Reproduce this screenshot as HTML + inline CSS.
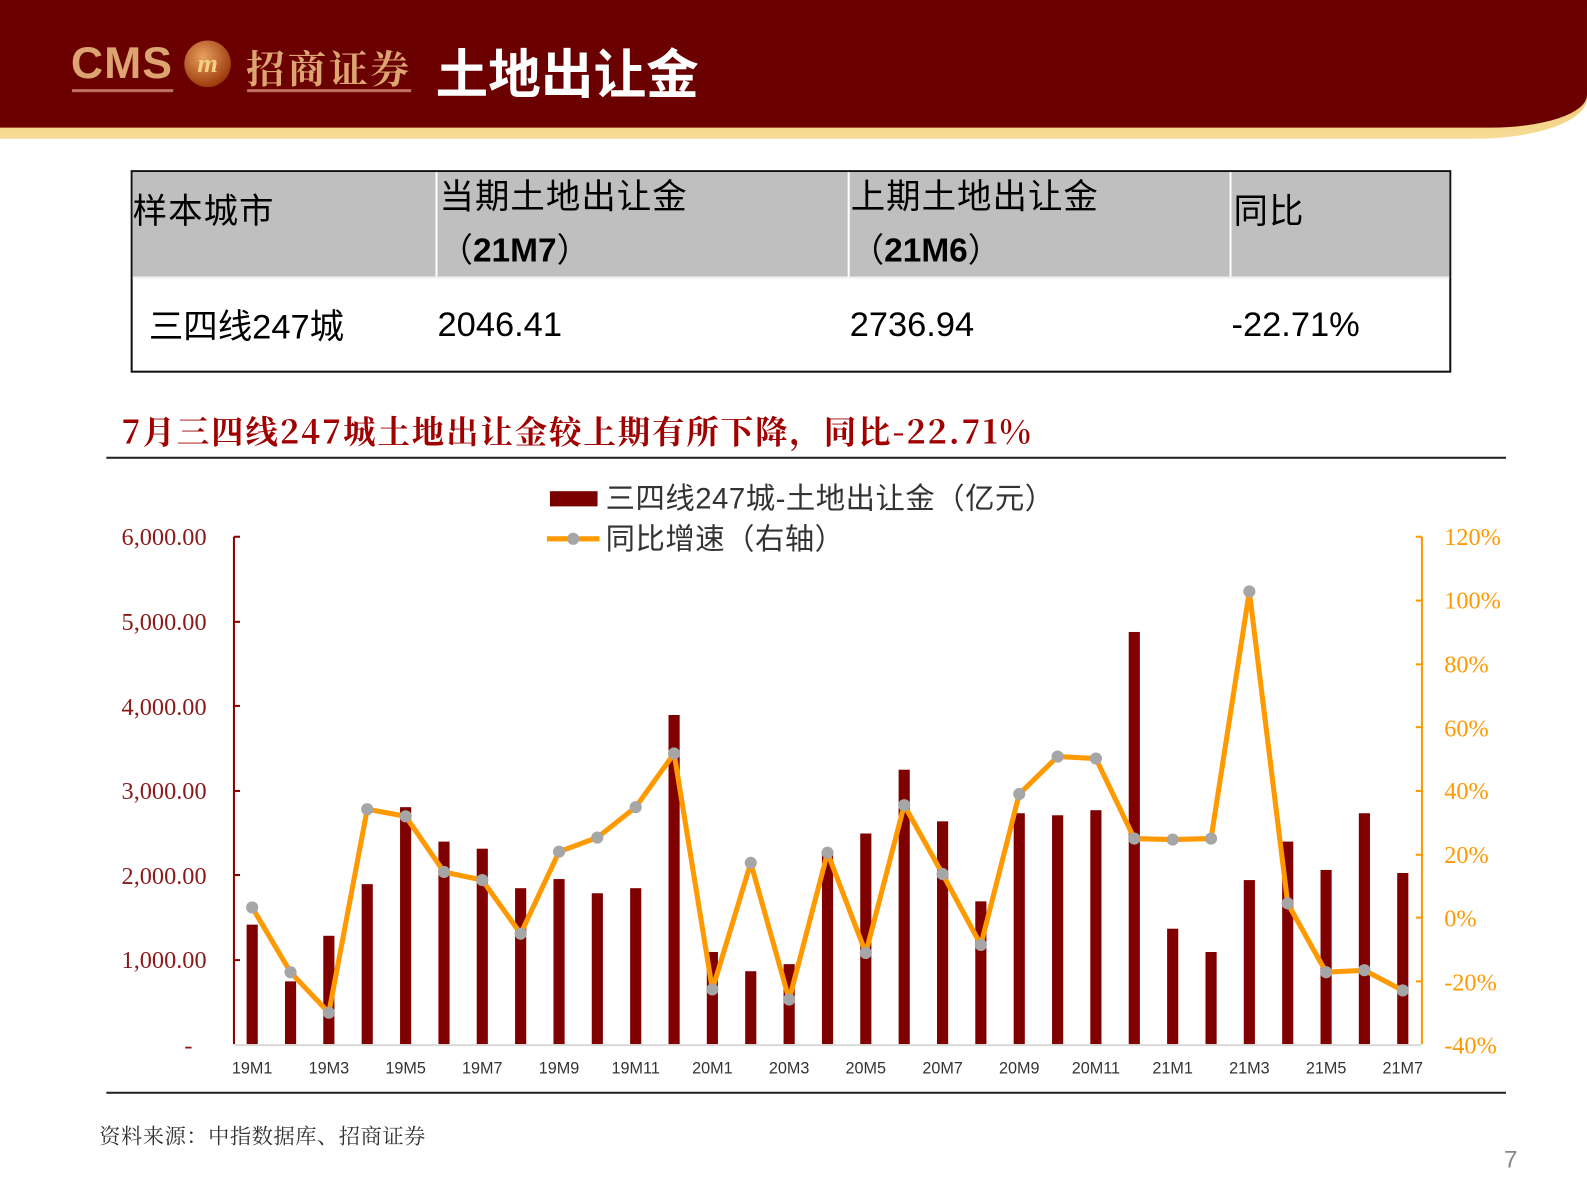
<!DOCTYPE html>
<html><head><meta charset="utf-8"><style>
html,body{margin:0;padding:0;background:#fff;width:1587px;height:1190px;overflow:hidden}
#w{position:absolute;left:0;top:0;width:1567px;height:1175px;transform:scale(1.01276);transform-origin:0 0;font-family:"Liberation Sans","Noto Sans CJK SC",sans-serif}
.a{position:absolute;white-space:nowrap}
</style></head><body><div id="w">
<div class="a" style="left:0;top:0;width:1567px;height:137px;background:linear-gradient(#b8792a,#e9b955 40%,#f7dc98);border-bottom-right-radius:110px 40px"></div>
<div class="a" style="left:0;top:0;width:1567px;height:126px;background:#6b0000;border-bottom-right-radius:95px 32px"></div>
<div class="a" style="left:70px;top:38px;font-size:44px;font-weight:bold;color:#dca470;letter-spacing:1px">CMS</div>
<div class="a" style="left:71px;top:88px;width:100px;height:3px;background:#c07060"></div>
<div class="a" style="left:182px;top:40px;width:46px;height:46px;border-radius:50%;background:radial-gradient(circle at 40% 35%,#e8a060,#a04010 70%,#6a1a00);color:#f3d080;font:italic bold 26px 'Liberation Serif',serif;text-align:center;line-height:46px">m</div>
<div class="a" style="left:243px;top:38px;font-size:38px;font-weight:bold;color:#dca470;font-family:'Noto Serif CJK SC',serif;letter-spacing:3px">招商证券</div>
<div class="a" style="left:244px;top:88px;width:162px;height:3px;background:#c07060"></div>
<div class="a" style="left:430px;top:32px;font-size:52px;font-weight:bold;color:#fff;font-family:'Noto Sans CJK SC',sans-serif">土地出让金</div>

<div class="a" style="left:129px;top:168px;width:1300px;height:196px;border:2px solid #111"></div>
<div class="a" style="left:131px;top:170px;width:1300px;height:103px;background:#bfbfbf"></div>
<div class="a" style="left:430px;top:170px;width:2px;height:103px;background:#fff"></div>
<div class="a" style="left:837px;top:170px;width:2px;height:103px;background:#fff"></div>
<div class="a" style="left:1214px;top:170px;width:2px;height:103px;background:#fff"></div>
<div class="a" style="left:131px;top:273px;width:1300px;height:2px;background:#f0f0f0"></div>
<div class="a" style="left:131px;top:181px;font-size:34px;letter-spacing:1px;color:#000;font-family:'Noto Sans CJK SC',sans-serif">样本城市</div>
<div class="a" style="left:434px;top:167px;font-size:34px;letter-spacing:1px;color:#000;font-family:'Noto Sans CJK SC',sans-serif">当期土地出让金</div>
<div class="a" style="left:434px;top:220px;font-size:33px;color:#000;font-family:'Liberation Sans','Noto Sans CJK SC',sans-serif"><span style="font-family:'Noto Sans CJK SC'">（</span><b>21M7</b><span style="font-family:'Noto Sans CJK SC'">）</span></div>
<div class="a" style="left:840px;top:167px;font-size:34px;letter-spacing:1px;color:#000;font-family:'Noto Sans CJK SC',sans-serif">上期土地出让金</div>
<div class="a" style="left:840px;top:220px;font-size:33px;color:#000;font-family:'Liberation Sans','Noto Sans CJK SC',sans-serif"><span style="font-family:'Noto Sans CJK SC'">（</span><b>21M6</b><span style="font-family:'Noto Sans CJK SC'">）</span></div>
<div class="a" style="left:1218px;top:181px;font-size:34px;letter-spacing:1px;color:#000;font-family:'Noto Sans CJK SC',sans-serif">同比</div>
<div class="a" style="left:147px;top:295px;font-size:34px;color:#000">三四线247城</div>
<div class="a" style="left:432px;top:302px;font-size:34px;color:#000">2046.41</div>
<div class="a" style="left:839px;top:302px;font-size:34px;color:#000">2736.94</div>
<div class="a" style="left:1216px;top:302px;font-size:34px;color:#000">-22.71%</div>

<div class="a" style="left:120px;top:402px;font-size:32px;font-weight:bold;color:#a00000;font-family:'Noto Serif CJK SC',serif;letter-spacing:1.9px">7月三四线247城土地出让金较上期有所下降，同比-22.71%</div>
<div class="a" style="left:105px;top:451px;width:1382px;height:2px;background:#222"></div>
<div class="a" style="left:105px;top:1078px;width:1382px;height:2px;background:#222"></div>

<svg class="a" style="left:0;top:0" width="1567" height="1175" viewBox="0 0 1567 1175">
<rect x="543" y="485" width="47" height="15" fill="#7a0000"/>
<text x="598" y="502" font-size="29" letter-spacing="0.5" fill="#333" font-family="Liberation Sans,Noto Sans CJK SC,sans-serif">三四线247城-土地出让金（亿元）</text>
<line x1="540" y1="532" x2="592" y2="532" stroke="#ff9900" stroke-width="5"/>
<circle cx="566" cy="532" r="6" fill="#a6a6a6"/>
<text x="598" y="542" font-size="29" letter-spacing="0.5" fill="#333" font-family="Liberation Sans,Noto Sans CJK SC,sans-serif">同比增速（右轴）</text>
<g font-family="Liberation Serif,serif" font-size="24" fill="#8b1a1a" text-anchor="end">
<text x="204" y="538">6,000.00</text><text x="204" y="622">5,000.00</text><text x="204" y="706">4,000.00</text><text x="204" y="789">3,000.00</text><text x="204" y="873">2,000.00</text><text x="204" y="956">1,000.00</text><text x="190" y="1040">-</text>
</g>
<g font-family="Liberation Serif,serif" font-size="24" fill="#ff9900">
<text x="1426" y="538">120%</text><text x="1426" y="601">100%</text><text x="1426" y="664">80%</text><text x="1426" y="727">60%</text><text x="1426" y="789">40%</text><text x="1426" y="852">20%</text><text x="1426" y="915">0%</text><text x="1426" y="978">-20%</text><text x="1426" y="1040">-40%</text>
</g>
<g stroke="#8b0000" stroke-width="2"><line x1="231" y1="530" x2="231" y2="1031"/><line x1="231" y1="530" x2="237" y2="530"/><line x1="231" y1="614" x2="237" y2="614"/><line x1="231" y1="697" x2="237" y2="697"/><line x1="231" y1="781" x2="237" y2="781"/><line x1="231" y1="864" x2="237" y2="864"/><line x1="231" y1="948" x2="237" y2="948"/></g>
<g stroke="#ff9900" stroke-width="2"><line x1="1404" y1="530" x2="1404" y2="1031"/><line x1="1398" y1="530" x2="1404" y2="530"/><line x1="1398" y1="593" x2="1404" y2="593"/><line x1="1398" y1="656" x2="1404" y2="656"/><line x1="1398" y1="718" x2="1404" y2="718"/><line x1="1398" y1="781" x2="1404" y2="781"/><line x1="1398" y1="844" x2="1404" y2="844"/><line x1="1398" y1="906" x2="1404" y2="906"/><line x1="1398" y1="969" x2="1404" y2="969"/></g>
<g fill="#800000">
<rect x="243.5" y="913" width="11" height="118"/><rect x="281.4" y="969" width="11" height="62"/><rect x="319.2" y="924" width="11" height="107"/><rect x="357.1" y="873" width="11" height="158"/><rect x="395" y="797" width="11" height="234"/><rect x="432.9" y="831" width="11" height="200"/><rect x="470.7" y="838" width="11" height="193"/><rect x="508.6" y="877" width="11" height="154"/><rect x="546.5" y="868" width="11" height="163"/><rect x="584.3" y="882" width="11" height="149"/><rect x="622.2" y="877" width="11" height="154"/><rect x="660.1" y="706" width="11" height="325"/><rect x="697.9" y="940" width="11" height="91"/><rect x="735.8" y="959" width="11" height="72"/><rect x="773.7" y="952" width="11" height="79"/><rect x="811.6" y="843" width="11" height="188"/><rect x="849.4" y="823" width="11" height="208"/><rect x="887.3" y="760" width="11" height="271"/><rect x="925.2" y="811" width="11" height="220"/><rect x="963" y="890" width="11" height="141"/><rect x="1000.9" y="803" width="11" height="228"/><rect x="1038.8" y="805" width="11" height="226"/><rect x="1076.6" y="800" width="11" height="231"/><rect x="1114.5" y="624" width="11" height="407"/><rect x="1152.4" y="917" width="11" height="114"/><rect x="1190.3" y="940" width="11" height="91"/><rect x="1228.1" y="869" width="11" height="162"/><rect x="1266" y="831" width="11" height="200"/><rect x="1303.9" y="859" width="11" height="172"/><rect x="1341.7" y="803" width="11" height="228"/><rect x="1379.6" y="862" width="11" height="169"/>
</g>
<line x1="232" y1="1032" x2="1403" y2="1032" stroke="#d9d9d9" stroke-width="2"/>
<polyline fill="none" stroke="#ff9900" stroke-width="5" stroke-linejoin="round" points="249,896 286.9,960 324.7,1000 362.6,799 400.5,806 438.4,861 476.2,869 514.1,922 552,841 589.8,827 627.7,797 665.6,744 703.4,977 741.3,852 779.2,987 817.1,842 854.9,941 892.8,795 930.7,863 968.5,933 1006.4,784 1044.3,747 1082.1,749 1120,828 1157.9,829 1195.8,828 1233.6,584 1271.5,892 1309.4,960 1347.2,958 1385.1,978"/>
<g fill="#a6a6a6">
<circle cx="249" cy="896" r="6"/><circle cx="286.9" cy="960" r="6"/><circle cx="324.7" cy="1000" r="6"/><circle cx="362.6" cy="799" r="6"/><circle cx="400.5" cy="806" r="6"/><circle cx="438.4" cy="861" r="6"/><circle cx="476.2" cy="869" r="6"/><circle cx="514.1" cy="922" r="6"/><circle cx="552" cy="841" r="6"/><circle cx="589.8" cy="827" r="6"/><circle cx="627.7" cy="797" r="6"/><circle cx="665.6" cy="744" r="6"/><circle cx="703.4" cy="977" r="6"/><circle cx="741.3" cy="852" r="6"/><circle cx="779.2" cy="987" r="6"/><circle cx="817.1" cy="842" r="6"/><circle cx="854.9" cy="941" r="6"/><circle cx="892.8" cy="795" r="6"/><circle cx="930.7" cy="863" r="6"/><circle cx="968.5" cy="933" r="6"/><circle cx="1006.4" cy="784" r="6"/><circle cx="1044.3" cy="747" r="6"/><circle cx="1082.1" cy="749" r="6"/><circle cx="1120" cy="828" r="6"/><circle cx="1157.9" cy="829" r="6"/><circle cx="1195.8" cy="828" r="6"/><circle cx="1233.6" cy="584" r="6"/><circle cx="1271.5" cy="892" r="6"/><circle cx="1309.4" cy="960" r="6"/><circle cx="1347.2" cy="958" r="6"/><circle cx="1385.1" cy="978" r="6"/>
</g>
<g font-family="Liberation Sans,sans-serif" font-size="16" fill="#333" text-anchor="middle">
<text x="249" y="1060">19M1</text><text x="324.7" y="1060">19M3</text><text x="400.5" y="1060">19M5</text><text x="476.2" y="1060">19M7</text><text x="552" y="1060">19M9</text><text x="627.7" y="1060">19M11</text><text x="703.4" y="1060">20M1</text><text x="779.2" y="1060">20M3</text><text x="854.9" y="1060">20M5</text><text x="930.7" y="1060">20M7</text><text x="1006.4" y="1060">20M9</text><text x="1082.1" y="1060">20M11</text><text x="1157.9" y="1060">21M1</text><text x="1233.6" y="1060">21M3</text><text x="1309.4" y="1060">21M5</text><text x="1385.1" y="1060">21M7</text>
</g>
</svg>
<div class="a" style="left:98px;top:1106px;font-size:21px;color:#333;font-family:'Noto Serif CJK SC',serif;letter-spacing:0.5px">资料来源：中指数据库、招商证券</div>
<div class="a" style="left:1485px;top:1132px;font-size:24px;color:#888">7</div>
</div></body></html>
